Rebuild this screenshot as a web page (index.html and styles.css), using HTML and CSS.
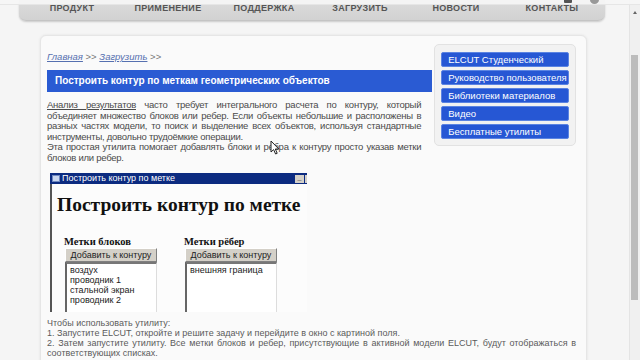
FILE: index.html
```html
<!DOCTYPE html>
<html lang="ru">
<head>
  <meta charset="UTF-8" />
  <meta name="viewport" content="width=device-width, initial-scale=1.0" />
  <title>Построить контур по меткам</title>
  <link rel="stylesheet" href="styles.css">
</head>
<body>
  <div class="chrome">
    <span class="chrome-icon"></span>
    <span class="chrome-icon round"></span>
  </div>

  <!-- mouse pointer captured in the screenshot -->
  <svg class="pointer" width="10" height="15" viewBox="0 0 10 15">
    <path d="M1 1 L1 12 L3.6 9.6 L5.6 14 L7.2 13.3 L5.3 9 L8.8 9 Z" fill="#fff" stroke="#222" stroke-width="1" stroke-linejoin="round"/>
  </svg>

  <div class="viewport">
    <div class="page">
      <nav class="topnav">
        <a href="#">Продукт</a>
        <a href="#">Применение</a>
        <a href="#">Поддержка</a>
        <a href="#">Загрузить</a>
        <a href="#">Новости</a>
        <a href="#">Контакты</a>
      </nav>

      <div class="panel">
        <div class="top-row">
          <div class="main-col">
            <div class="crumbs">
              <a href="#">Главная</a> &gt;&gt; <a href="#">Загрузить</a> &gt;&gt;
            </div>
            <h1 class="title-bar">Построить контур по меткам геометрических объектов</h1>
            <p class="intro">
              <a href="#">Анализ результатов</a> часто требует интегрального расчета по контуру, который
              объединяет множество блоков или ребер. Если объекты небольшие и расположены в разных
              частях модели, то поиск и выделение всех объектов, используя стандартные инструменты,
              довольно трудоёмкие операции.<br>
              Эта простая утилита помогает добавлять блоки и ребра к контуру просто указав метки
              блоков или ребер.
            </p>
          </div>

          <div class="side-box">
            <a class="side-btn" href="#">ELCUT Студенческий</a>
            <a class="side-btn" href="#">Руководство пользователя</a>
            <a class="side-btn" href="#">Библиотеки материалов</a>
            <a class="side-btn" href="#">Видео</a>
            <a class="side-btn" href="#">Бесплатные утилиты</a>
          </div>
        </div>

        <!-- screenshot of the utility window -->
        <div class="win">
          <div class="win-title">
            <span class="win-icon"></span>
            <span class="win-caption">Построить контур по метке</span>
            <span class="win-btn">_</span>
            <span class="win-btn cut"></span>
          </div>
          <div class="win-body">
            <div class="win-heading">Построить контур по метке</div>
            <div class="win-cols">
              <div class="win-col">
                <div class="win-label">Метки блоков</div>
                <div class="win-button">Добавить к контуру</div>
                <ul class="win-list">
                  <li>воздух</li>
                  <li>проводник 1</li>
                  <li>стальной экран</li>
                  <li>проводник 2</li>
                </ul>
              </div>
              <div class="win-col">
                <div class="win-label">Метки рёбер</div>
                <div class="win-button">Добавить к контуру</div>
                <ul class="win-list">
                  <li>внешняя граница</li>
                </ul>
              </div>
            </div>
          </div>
        </div>

        <p class="howto">
          Чтобы использовать утилиту:<br>
          1. Запустите ELCUT, откройте и решите задачу и перейдите в окно с картиной поля.<br>
          2. Затем запустите утилиту. Все метки блоков и ребер, присутствующие в активной модели ELCUT,
          будут отображаться в соответствующих списках.
        </p>
      </div>
    </div>

    <div class="scrollbar">
      <div class="scroll-up"></div>
      <div class="scroll-thumb"></div>
    </div>
  </div>
</body>
</html>
```

FILE: styles.css
```css
* {
  box-sizing: border-box;
  margin: 0;
  padding: 0;
}

html, body {
  width: 640px;
  height: 360px;
  overflow: hidden;
}

body {
  font-family: "Liberation Sans", Arial, sans-serif;
  background: #f5f5f5;
  color: #444;
  position: relative;
}

/* browser toolbar edge on top */
.chrome {
  position: absolute;
  top: 0;
  left: 0;
  right: 0;
  height: 5px;
  background: rgba(246, 246, 246, 0.9);
  border-bottom: 1px solid rgba(220, 220, 220, 0.6);
  z-index: 5;
}

.chrome-icon {
  position: absolute;
  top: -4px;
  left: 564px;
  width: 8px;
  height: 7px;
  background: #555;
  border-radius: 1px;
}

.chrome-icon.round {
  left: 590px;
  width: 9px;
  height: 8px;
  background: #999;
  border-radius: 50%;
}

.pointer {
  position: absolute;
  left: 270px;
  top: 140px;
  z-index: 6;
}

.viewport {
  display: flex;
  height: 360px;
}

.page {
  flex: 1;
}

/* top navigation */
.topnav {
  margin-left: 19px;
  width: 586px;
  height: 21px;
  padding-left: 5px;
  display: grid;
  grid-template-columns: repeat(6, 96px);
  background: linear-gradient(#dcdcdc, #d2d2d2);
  border-radius: 0 0 7px 7px;
  border-bottom: 1px solid #c4c4c4;
  box-shadow: 0 1px 2px rgba(0, 0, 0, 0.18);
}

.topnav a {
  text-align: center;
  font-size: 9px;
  font-weight: bold;
  letter-spacing: 0.3px;
  text-transform: uppercase;
  color: #555;
  text-decoration: none;
  line-height: 16px;
}

/* white content panel */
.panel {
  margin: 14px 0 0 40px;
  width: 547px;
  height: 340px;
  padding: 8px 10px 0 6px;
  background: #fafafa;
  border: 1px solid #e6e6e6;
  border-radius: 6px;
  box-shadow: 0 0 3px rgba(0, 0, 0, 0.08);
}

.top-row {
  display: flex;
  gap: 2px;
}

.main-col {
  width: 386px;
}

.crumbs {
  margin-top: 8px;
  font-size: 9.5px;
  line-height: 10px;
  color: #777;
}

.crumbs a {
  color: #5670b0;
  font-style: italic;
}

.title-bar {
  margin-top: 8px;
  height: 22px;
  padding-left: 8px;
  background: #2a5bd3;
  color: #fff;
  font-size: 10px;
  font-weight: bold;
  line-height: 22px;
}

.intro {
  margin-top: 8px;
  padding-right: 11px;
  font-size: 9.5px;
  letter-spacing: -0.25px;
  line-height: 10.5px;
  text-align: justify;
  color: #4a4a4a;
}

.intro a {
  color: #4a4a4a;
}

/* right menu */
.side-box {
  width: 142px;
  height: 102px;
  padding: 7px 6px 0 6px;
  display: flex;
  flex-direction: column;
  gap: 3px;
  background: #f2f2f2;
  border: 1px solid #e2e2e2;
  border-radius: 5px;
}

.side-btn {
  display: block;
  height: 15px;
  padding-left: 6px;
  background: #2657d4;
  border: 1px solid #5b84e2;
  border-radius: 2px;
  color: #fff;
  font-size: 9.5px;
  line-height: 13px;
  text-decoration: none;
  white-space: nowrap;
}

/* utility window picture */
.win {
  margin: 10px 0 0 3px;
  width: 257px;
}

.win-title {
  height: 11px;
  display: flex;
  align-items: center;
  background: #0c2b80;
  padding-left: 2px;
}

.win-icon {
  width: 8px;
  height: 7px;
  background: #c9d6ee;
  border: 1px solid #6f88c0;
  margin-right: 2px;
}

.win-caption {
  flex: 1;
  color: #fff;
  font-size: 9px;
  line-height: 11px;
}

.win-btn {
  width: 9px;
  height: 8px;
  background: #d4d0c8;
  font-size: 7px;
  line-height: 5px;
  text-align: center;
  color: #000;
  font-weight: bold;
}

.win-btn.cut {
  width: 2px;
  margin-left: 1px;
}

.win-body {
  height: 128px;
  border-left: 2px solid #555;
  background: #fcfcfc;
  padding: 9px 0 0 5px;
  overflow: hidden;
}

.win-heading {
  font-family: "Liberation Serif", "Times New Roman", serif;
  font-weight: bold;
  font-size: 19.5px;
  line-height: 24px;
  color: #111;
  white-space: nowrap;
}

.win-cols {
  display: flex;
  margin-top: 19px;
  padding-left: 7px;
}

.win-col {
  width: 120px;
}

.win-label {
  font-family: "Liberation Serif", "Times New Roman", serif;
  font-weight: bold;
  font-size: 10.5px;
  line-height: 12px;
  color: #111;
}

.win-button {
  margin-left: 1px;
  width: 92px;
  height: 14px;
  background: #d4d0c8;
  border: 1px solid;
  border-color: #fff #808080 #808080 #fff;
  font-size: 9px;
  line-height: 12px;
  text-align: center;
  color: #222;
}

.win-list {
  list-style: none;
  margin-left: 1px;
  width: 92px;
  height: 60px;
  padding: 1px 3px;
  background: #fff;
  border-left: 2px solid #666;
  border-top: 2px solid #777;
  border-right: 1px solid #ddd;
  font-size: 9px;
  line-height: 10px;
  color: #222;
}

/* instructions */
.howto {
  margin-top: 6px;
  font-size: 9px;
  line-height: 10px;
  text-align: justify;
  color: #5a5a5a;
}

/* page scrollbar */
.scrollbar {
  width: 11px;
  background: #f0f0f0;
  border-left: 1px solid #e4e4e4;
  padding-top: 11px;
}

.scroll-up {
  width: 0;
  height: 0;
  margin-left: 3px;
  border-left: 2px solid transparent;
  border-right: 2px solid transparent;
  border-bottom: 3px solid #666;
}

.scroll-thumb {
  margin: 41px 0 0 1px;
  width: 7px;
  height: 245px;
  background: #bcbcbc;
}
```
